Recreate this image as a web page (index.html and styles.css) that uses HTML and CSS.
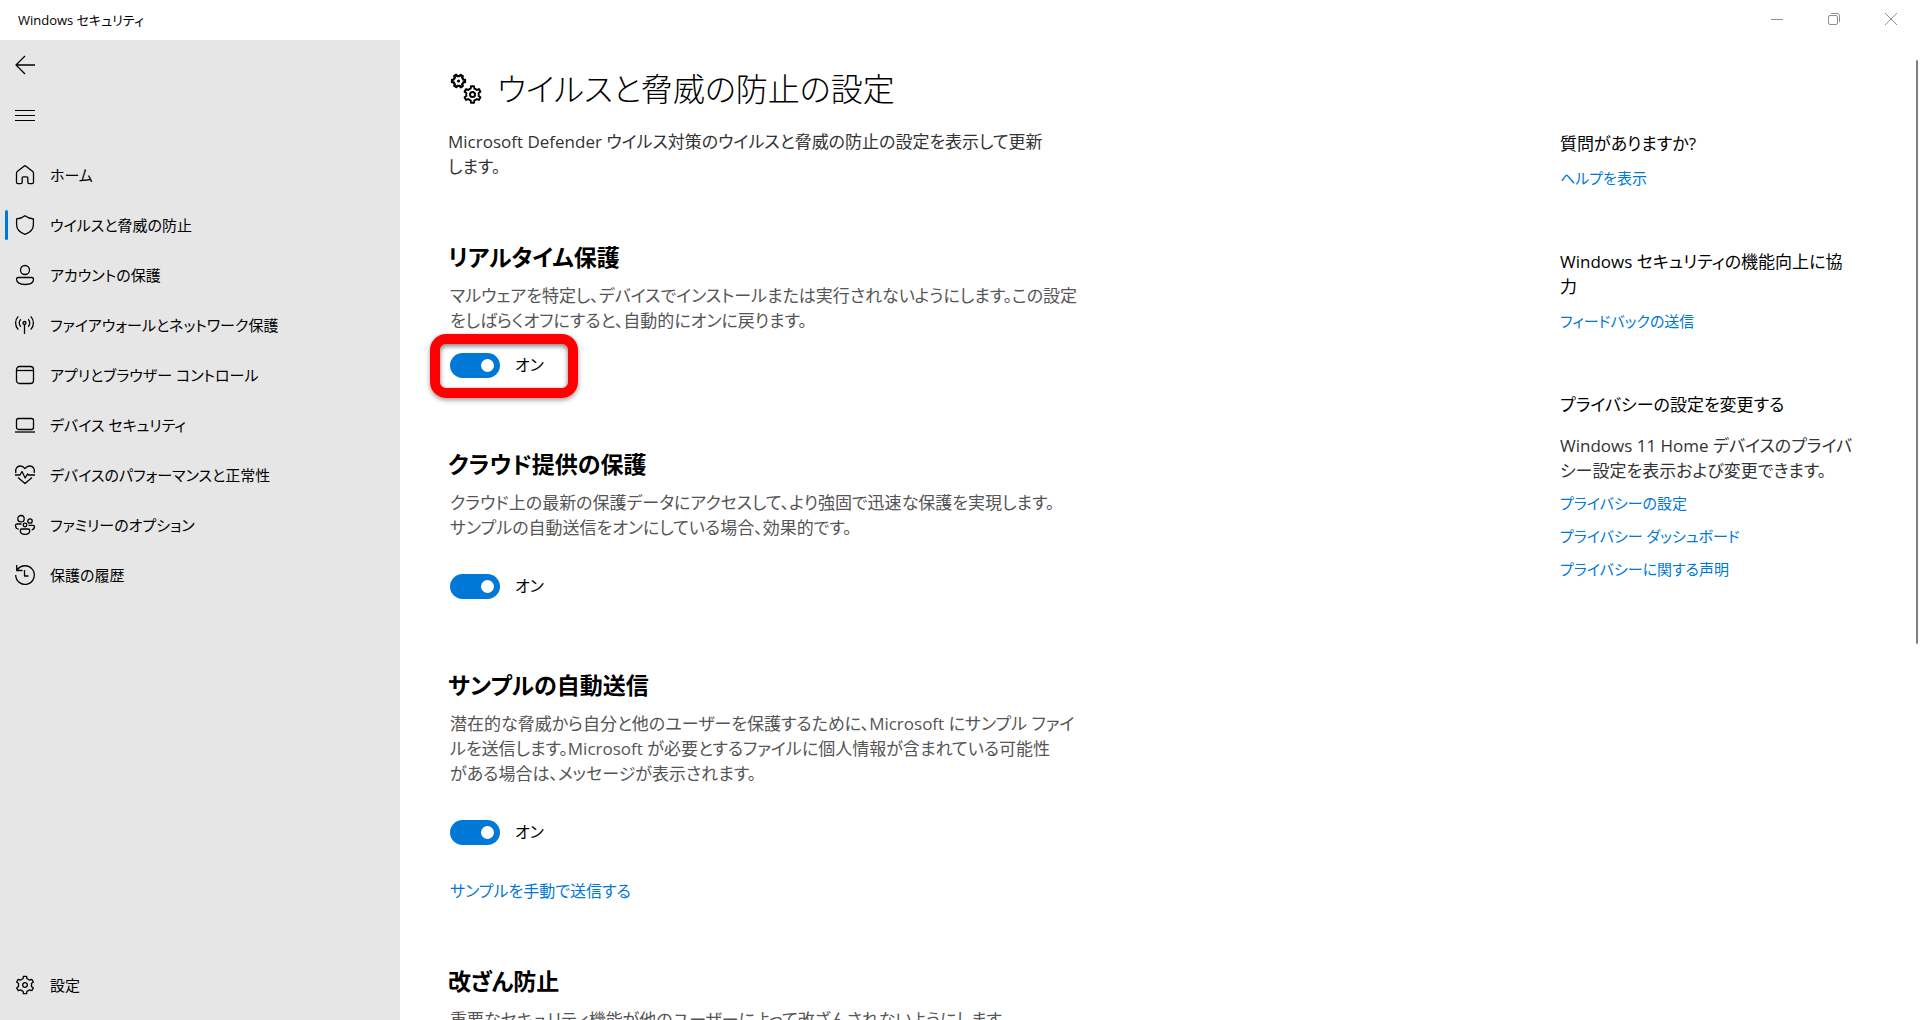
FILE: index.html
```html
<!DOCTYPE html>
<html lang="ja">
<head>
<meta charset="utf-8">
<title>Windows セキュリティ</title>
<link rel="stylesheet" href="styles.css">
</head>
<body>
<svg class="defs" aria-hidden="true">
  <symbol id="gear" viewBox="-10 -10 20 20">
    <path d="M-1.9-6.3L-1.6-8.7H1.6L1.9-6.3Q3.4-5.8 4.51-4.8L6.77-5.7L8.37-2.93L6.41-1.5Q6.8 0 6.41 1.5L8.37 2.93L6.77 5.7L4.51 4.8Q3.4 5.8 1.9 6.3L1.6 8.7H-1.6L-1.9 6.3Q-3.4 5.8-4.51 4.8L-6.77 5.7L-8.37 2.93L-6.41 1.5Q-6.8 0-6.41-1.5L-8.37-2.93L-6.77-5.7L-4.51-4.8Q-3.4-5.8-1.9-6.3Z"/>
  </symbol>
</svg>

<header class="titlebar">
  <span class="titlebar-name">Windows セキュリティ</span>
  <div class="window-buttons">
    <button type="button" aria-label="最小化"><svg viewBox="0 0 12 12"><path d="M0 6.5h12"/></svg></button>
    <button type="button" aria-label="元に戻す"><svg viewBox="0 0 12 12"><rect x=".5" y="2.5" width="9" height="9" rx="1.5"/><path d="M3 .5h6a2.5 2.5 0 0 1 2.500 2.500v6"/></svg></button>
    <button type="button" aria-label="閉じる"><svg viewBox="0 0 12 12"><path d="M0 0l12 12M12 0L0 12"/></svg></button>
  </div>
</header>

<div class="window">
  <nav class="sidebar">
    <button type="button" class="nav-item" aria-label="戻る"><svg viewBox="0 0 20 20"><path d="M20 10H1M10 1L1 10l9 9"/></svg></button>
    <button type="button" class="nav-item" aria-label="ナビゲーションを開く"><svg class="menu-icon" viewBox="0 0 20 20"><path d="M0 5.500h20M0 10.500h20M0 15.500h20"/></svg></button>
    <ul class="nav-list">
      <li><a href="#" class="nav-item"><svg viewBox="0 0 20 20"><path d="M1.500 8.300c0-.7.3-1.300.8-1.700L9 1.200c.6-.5 1.400-.5 2 0l6.700 5.400c.5.4.8 1 .8 1.700v9c0 .8-.6 1.400-1.400 1.400h-2.900c-.8 0-1.400-.6-1.400-1.400v-4.500c0-.6-.4-1-1-1H8.200c-.6 0-1 .4-1 1v4.500c0 .8-.6 1.400-1.400 1.400H2.900c-.8 0-1.400-.6-1.400-1.400Z"/></svg>ホーム</a></li>
      <li><a href="#" class="nav-item current" aria-current="page"><svg viewBox="0 0 20 20"><path d="M10 .8c2.400 1.900 5.200 2.900 8.400 3.100v5.600c0 4.800-3 8-8.400 9.800-5.400-1.800-8.400-5-8.400-9.800V3.900C4.800 3.700 7.600 2.700 10 .8Z"/></svg>ウイルスと脅威の防止</a></li>
      <li><a href="#" class="nav-item"><svg viewBox="0 0 20 20"><circle cx="10" cy="5" r="4.500"/><path d="M3.300 12.500h13.400c1 0 1.800.8 1.800 1.800 0 3.200-3.500 5.200-8.500 5.200s-8.500-2-8.500-5.200c0-1 .8-1.800 1.800-1.800Z"/></svg>アカウントの保護</a></li>
      <li><a href="#" class="nav-item"><svg viewBox="0 0 20 20"><circle cx="9.500" cy="8" r="1.500"/><path d="M9.500 9.500V19M5.800 11.700a5.200 5.200 0 0 1 0-7.400M13.200 4.300a5.200 5.200 0 0 1 0 7.400M3.300 14.600a9.400 9.400 0 0 1 0-13.200M15.700 1.400a9.400 9.400 0 0 1 0 13.200"/></svg>ファイアウォールとネットワーク保護</a></li>
      <li><a href="#" class="nav-item"><svg viewBox="0 0 20 20"><rect x="1.500" y="1.500" width="17" height="17" rx="3"/><path d="M1.500 5.500h17"/></svg>アプリとブラウザー コントロール</a></li>
      <li><a href="#" class="nav-item"><svg viewBox="0 0 20 20"><rect x="1.500" y="3.500" width="17" height="11" rx="2"/><path d="M0 17h20"/></svg>デバイス セキュリティ</a></li>
      <li><a href="#" class="nav-item"><svg viewBox="0 0 20 20"><path d="M.8 8C-.2 3.600 2.200 1 5.200 1 7.500 1 8.800 2 10 3.600 11.200 2 12.500 1 14.800 1c3 0 5.400 2.600 4.400 7M0 10h5l2-3.500 3.200 6.500 2.300-4 1 1H20M3 12.500l7 6 7-6"/></svg>デバイスのパフォーマンスと正常性</a></li>
      <li><a href="#" class="nav-item"><svg viewBox="0 0 20 20"><circle cx="6" cy="3.700" r="3.200"/><circle cx="15" cy="6" r="2.200"/><circle cx="10" cy="10" r="1.800"/><path d="M6.500 9H2C1 9 .5 9.600.5 10.500c0 2 1.200 3.300 3.200 3.700M13.500 10.300H18c1 0 1.500.6 1.500 1.500 0 1.500-.9 2.600-2.800 3M6.800 14h6.400c.9 0 1.500.6 1.500 1.500 0 2.300-1.900 3.900-4.700 3.900s-4.700-1.600-4.700-3.900c0-.9.6-1.500 1.500-1.500Z"/></svg>ファミリーのオプション</a></li>
      <li><a href="#" class="nav-item"><svg viewBox="0 0 20 20"><path d="M1.700 0v5.500h5.800M2 5.300A9.300 9.300 0 1 1 .7 10M9.500 5v6h4"/></svg>保護の履歴</a></li>
    </ul>
    <a href="#" class="nav-item nav-settings"><svg viewBox="0 0 20 20"><use href="#gear" width="20" height="20"/><circle cx="10" cy="10" r="2.300"/></svg>設定</a>
  </nav>

  <main class="content">
    <div class="settings">
      <h1><svg class="title-icon" viewBox="0 0 32 32"><use class="small-gear" href="#gear" x="3" y=".5" width="15" height="15" transform="rotate(30 10.500 8)"/><circle class="dot" cx="10.500" cy="8" r="1.600"/><use href="#gear" x="15" y="12" width="19" height="19"/><circle cx="24.500" cy="21.500" r="2.500"/></svg>ウイルスと脅威の防止の設定</h1>
      <p class="lead">Microsoft Defender ウイルス対策のウイルスと脅威の防止の設定を表示して更新<br>します。</p>

      <section class="setting first">
        <h2>リアルタイム保護</h2>
        <p>マルウェアを特定し、デバイスでインストールまたは実行されないようにします。この設定<br>をしばらくオフにすると、自動的にオンに戻ります。</p>
        <label class="toggle marked"><input type="checkbox" role="switch" checked>オン</label>
      </section>

      <section class="setting">
        <h2>クラウド提供の保護</h2>
        <p>クラウド上の最新の保護データにアクセスして、より強固で迅速な保護を実現します。<br>サンプルの自動送信をオンにしている場合、効果的です。</p>
        <label class="toggle"><input type="checkbox" role="switch" checked>オン</label>
      </section>

      <section class="setting">
        <h2>サンプルの自動送信</h2>
        <p>潜在的な脅威から自分と他のユーザーを保護するために、Microsoft にサンプル ファイ<br>ルを送信します。Microsoft が必要とするファイルに個人情報が含まれている可能性<br>がある場合は、メッセージが表示されます。</p>
        <label class="toggle"><input type="checkbox" role="switch" checked>オン</label>
        <a href="#" class="setting-link">サンプルを手動で送信する</a>
      </section>

      <section class="setting last">
        <h2>改ざん防止</h2>
        <p>重要なセキュリティ機能が他のユーザーによって改ざんされないようにします。</p>
      </section>
    </div>

    <aside class="help">
      <section>
        <h3>質問がありますか?</h3>
        <a href="#">ヘルプを表示</a>
      </section>
      <section>
        <h3>Windows セキュリティの機能向上に協<br>力</h3>
        <a href="#">フィードバックの送信</a>
      </section>
      <section>
        <h3>プライバシーの設定を変更する</h3>
        <p>Windows 11 Home デバイスのプライバ<br>シー設定を表示および変更できます。</p>
        <a href="#">プライバシーの設定</a>
        <a href="#">プライバシー ダッシュボード</a>
        <a href="#">プライバシーに関する声明</a>
      </section>
    </aside>
    <div class="scroll-thumb"></div>
  </main>
</div>
</body>
</html>
```

FILE: styles.css
```css
*, *::before, *::after { box-sizing: border-box; }

body {
  margin: 0;
  height: 100vh;
  display: flex;
  flex-direction: column;
  overflow: hidden;
  background: #fff;
  color: #000;
  font: 17px/25px "Open Sans", "Noto Sans CJK JP", sans-serif;
  font-feature-settings: "palt";
}

h1, h2, h3, p, ul { margin: 0; padding: 0; font-size: inherit; font-weight: 400; }
ul { list-style: none; }
a { color: #0078d7; text-decoration: none; }
button { border: 0; padding: 0; background: none; font: inherit; }
svg { fill: none; stroke: #000; stroke-width: 1.3; stroke-linejoin: round; flex: none; }
.defs { position: absolute; width: 0; height: 0; }

/* Title bar */
.titlebar {
  flex: none;
  height: 40px;
  padding-left: 18px;
  display: flex;
  align-items: center;
  justify-content: space-between;
  font-size: 13px;
}
.window-buttons {
  height: 38px;
  align-self: flex-start;
  padding-right: 1px;
  display: flex;
}
.window-buttons button {
  width: 57px;
  display: flex;
  align-items: center;
  justify-content: center;
}
.window-buttons svg { width: 12px; height: 12px; stroke: #909090; stroke-width: 1; overflow: visible; }

.window { flex: 1; min-height: 0; display: flex; }

/* Navigation */
.sidebar {
  flex: none;
  width: 400px;
  padding-bottom: 10px;
  display: flex;
  flex-direction: column;
  background: #e6e6e6;
}
.nav-list { margin-top: 10px; }
.nav-item {
  position: relative;
  height: 50px;
  padding-left: 15px;
  display: flex;
  align-items: center;
  gap: 15px;
  color: #000;
  font-size: 15px;
}
.nav-item svg { width: 20px; height: 20px; overflow: visible; }
.nav-item .menu-icon { stroke-width: 1; }
.nav-item.current::before {
  content: "";
  position: absolute;
  left: 5px;
  top: 10px;
  width: 3px;
  height: 30px;
  border-radius: 2px;
  background: #0078d7;
}
.nav-settings { margin-top: auto; }

/* Settings column */
.content {
  position: relative;
  flex: 1;
  min-width: 0;
  overflow: hidden;
  padding: 25px 60px 0 48px;
  display: flex;
  justify-content: space-between;
}
.settings { width: 640px; white-space: nowrap; }
h1 {
  display: flex;
  align-items: center;
  gap: 17px;
  font-size: 32px;
  line-height: 48px;
  font-weight: 300;
}
.title-icon { width: 32px; height: 32px; stroke-width: 2; overflow: visible; }
.title-icon .small-gear { stroke-width: 3; }
.title-icon .dot { fill: #000; stroke: none; }
.lead { margin-top: 16px; color: #333; }
.setting { margin-top: 70px; }
.setting.first { margin-top: 62px; }
.setting.last { margin-top: 61px; }
.setting h2 { font-size: 23px; line-height: 32px; font-weight: 600; }
.setting p { margin-top: 10px; padding-left: 2px; color: #555; }
.toggle {
  position: relative;
  width: max-content;
  margin-top: 34px;
  margin-left: 2px;
  display: flex;
  align-items: center;
  gap: 15px;
  font-size: 16px;
}
.toggle input {
  appearance: none;
  margin: 0;
  width: 50px;
  height: 25px;
  padding: 0 6px;
  border-radius: 13px;
  background: #0078d7;
  display: flex;
  align-items: center;
  justify-content: flex-end;
}
.toggle input::before {
  content: "";
  width: 13px;
  height: 13px;
  border-radius: 50%;
  background: #fff;
}
.first .toggle { margin-top: 20px; }
.marked::after {
  content: "";
  position: absolute;
  left: -20px;
  top: -19px;
  width: 148px;
  height: 64px;
  border: 10px solid #f00;
  border-radius: 16px;
  box-shadow: 0 2px 5px #0006, inset 0 2px 5px #0008;
}
.setting-link { display: block; margin-top: 34px; padding-left: 2px; font-size: 16px; }

/* Help column */
.help { width: 300px; margin-top: 66px; white-space: nowrap; }
.help section + section { margin-top: 58px; }
.help a { display: block; margin-top: 8px; font-size: 15px; }
.help h3 + a { margin-top: 10px; }
.help p { margin-top: 16px; color: #333; }

.scroll-thumb {
  position: absolute;
  right: 2px;
  top: 20px;
  width: 2px;
  height: 584px;
  border-radius: 1px;
  background: #808080;
}
```
